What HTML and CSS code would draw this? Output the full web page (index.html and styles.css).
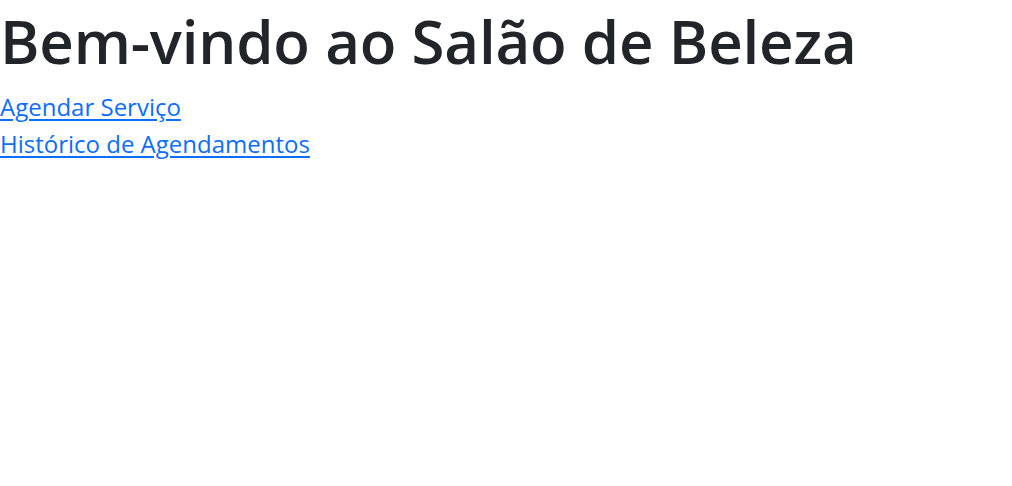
FILE: index.html
```html
<!DOCTYPE html>
<html lang="pt-BR">
<head>
<meta charset="utf-8">
<title>Salão de Beleza</title>
<link rel="stylesheet" href="styles.css">
</head>
<body>
<h1 class="title">Bem-vindo ao Salão de Beleza</h1>
<nav class="links">
<a href="#" class="link">Agendar Serviço</a>
<a href="#" class="link">Histórico de Agendamentos</a>
</nav>
</body>
</html>
```

FILE: styles.css
```css
html, body {
  margin: 0;
  padding: 0;
  background: #fff;
}
body {
  font-family: "Open Sans", "Noto Sans", sans-serif;
  font-size: 24px;
  line-height: 37px;
  color: #212529;
  padding-top: 5px;
}
.title {
  margin: 0 0 11px;
  font-size: 60px;
  font-weight: 600;
  letter-spacing: -0.2px;
  line-height: 72px;
}
.links {
  display: flex;
  flex-direction: column;
  align-items: flex-start;
}
.link {
  color: #0d6efd;
  text-decoration: underline;
  text-underline-offset: 3px;
}
```
